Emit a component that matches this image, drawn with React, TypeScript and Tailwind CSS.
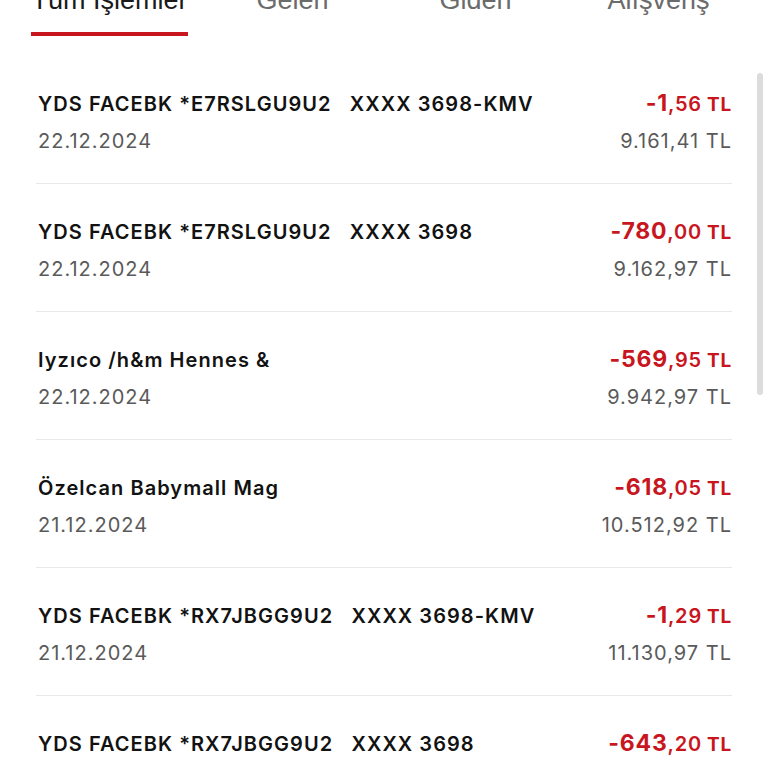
import React from 'react';

type Tx = { title: string; date: string; int: string; dec: string; balance: string };

const TXS: Tx[] = [
  { title: 'YDS FACEBK *E7RSLGU9U2   XXXX 3698-KMV', date: '22.12.2024', int: '-1', dec: ',56', balance: '9.161,41 TL' },
  { title: 'YDS FACEBK *E7RSLGU9U2   XXXX 3698', date: '22.12.2024', int: '-780', dec: ',00', balance: '9.162,97 TL' },
  { title: 'Iyzıco /h&m Hennes &', date: '22.12.2024', int: '-569', dec: ',95', balance: '9.942,97 TL' },
  { title: 'Özelcan Babymall Mag', date: '21.12.2024', int: '-618', dec: ',05', balance: '10.512,92 TL' },
  { title: 'YDS FACEBK *RX7JBGG9U2   XXXX 3698-KMV', date: '21.12.2024', int: '-1', dec: ',29', balance: '11.130,97 TL' },
  { title: 'YDS FACEBK *RX7JBGG9U2   XXXX 3698', date: '21.12.2024', int: '-643', dec: ',20', balance: '11.132,26 TL' },
];

const TABS = ['Tüm İşlemler', 'Gelen', 'Giden', 'Alışveriş'];

function Row({ tx }: { tx: Tx }) {
  return (
    <div className="mx-[36px] border-b border-[#e8e8e8] pt-[35px] pb-[29px] pl-[2px]">
      <div className="flex h-[26px] items-center justify-between">
        <span className="whitespace-pre text-[20px] leading-[26px] tracking-[1.05px] font-semibold text-[#121212]">{tx.title}</span>
        <span className="flex items-baseline leading-[26px] tracking-[0.8px] text-[#c8161f] font-bold">
          <span className="text-[23px]">{tx.int}</span>
          <span className="text-[20px] font-semibold">{tx.dec}</span>
          <span className="ml-[5px] text-[19px]">TL</span>
        </span>
      </div>
      <div className="mt-[11px] flex h-[26px] items-center justify-between text-[20px] leading-[26px] tracking-[1px] text-[#5a5a5a]">
        <span>{tx.date}</span>
        <span>{tx.balance}</span>
      </div>
    </div>
  );
}

export default function App() {
  return (
    <div className="h-[768px] w-[768px] overflow-hidden bg-white" style={{ fontFamily: 'Inter, "Noto Sans", sans-serif' }}>
      {/* tabs, scrolled partly off the top */}
      <div className="-mt-[13px] grid grid-cols-4 px-[18px]" style={{ fontFamily: '"Liberation Sans", Arial, sans-serif' }}>
        {TABS.map((t, i) => (
          <div key={t} className="flex justify-center">
            <div className="flex flex-col items-stretch">
              <span className={`text-[27px] leading-[26px] whitespace-nowrap ${i === 0 ? 'text-[#1a1a1a]' : 'text-[#6b6b6b]'}`}>{t}</span>
              <div className={`mt-[19px] h-[4px] ${i === 0 ? 'bg-[#c8161f]' : 'bg-transparent'}`} />
            </div>
          </div>
        ))}
      </div>

      <div className="relative mt-[20px]">
        {TXS.map((tx, i) => (
          <Row key={i} tx={tx} />
        ))}
        <div className="absolute right-[5px] top-[17px] h-[322px] w-[6px] rounded-full bg-[#dcdcdc]" />
      </div>
    </div>
  );
}
